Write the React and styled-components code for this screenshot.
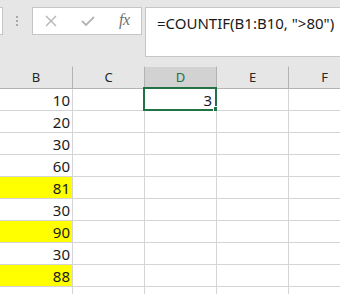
import React from 'react'
import styled, { createGlobalStyle } from 'styled-components'

const GlobalStyle = createGlobalStyle`
  body {
    margin: 0;
    background: #ffffff;
    font-family: 'Noto Sans', 'Open Sans', sans-serif;
    overflow: hidden;
  }
`

const EXCEL_GREEN = '#217346'
const GRID_LINE = '#d4d4d4'
const HEAD_LINE = '#b3b3b3'

const Sheet = styled.div`
  width: 340px;
  height: 294px;
  overflow: hidden;
`

const FormulaBar = styled.div`
  height: 66px;
  background: #e6e6e6;
  display: flex;
  align-items: flex-start;
  padding-top: 7px;
  box-sizing: border-box;
`

const NameBoxStub = styled.div`
  width: 3px;
  height: 28px;
  background: #fff;
  border: 1px solid #c6c6c6;
  border-left: none;
  box-sizing: border-box;
`

const Grip = styled.div`
  width: 2px;
  margin: 9px 14px 0 13px;
  display: flex;
  flex-direction: column;
  gap: 2px;

  span {
    width: 2px;
    height: 2px;
    background: #a8a8a8;
  }
`

const ActionBox = styled.div`
  width: 110px;
  height: 28px;
  background: #fff;
  border: 1px solid #c6c6c6;
  box-sizing: border-box;
  display: flex;
  align-items: center;
  padding-left: 12px;
  gap: 24px;
`

const FxLabel = styled.span`
  font-family: 'Liberation Serif', serif;
  font-style: italic;
  font-size: 16px;
  color: #6f6f6f;
  margin-top: -2px;
  letter-spacing: -0.5px;
`

const FormulaInput = styled.div`
  flex: 1;
  margin-left: 3px;
  height: 50px;
  background: #fff;
  border: 1px solid #c6c6c6;
  border-right: none;
  box-sizing: border-box;
  padding: 5px 0 0 11px;
  font-size: 15px;
  color: #1a1a1a;
  white-space: nowrap;
`

const Grid = styled.div`
  display: grid;
  grid-template-columns: 73px 72px 72px 72px 72px;
`

const HeadCell = styled.div`
  height: 23px;
  box-sizing: border-box;
  background: ${(p) => (p.active ? '#d2d2d2' : '#e6e6e6')};
  color: ${(p) => (p.active ? EXCEL_GREEN : '#262626')};
  border-bottom: 1px solid ${(p) => (p.active ? EXCEL_GREEN : HEAD_LINE)};
  border-right: 1px solid ${HEAD_LINE};
  border-top: 1px solid #e6e6e6;
  font-size: 13px;
  display: flex;
  align-items: center;
  justify-content: center;
  padding-bottom: 1px;
`

const Cell = styled.div`
  position: relative;
  height: 22px;
  box-sizing: border-box;
  border-right: 1px solid ${GRID_LINE};
  border-bottom: 1px solid ${GRID_LINE};
  background: ${(p) => (p.fill ? '#ffff00' : '#ffffff')};
  font-size: 15px;
  color: #1a1a1a;
  text-align: right;
  padding-right: ${(p) => (p.selected ? '4px' : '2px')};
  line-height: 23px;
`

const Selection = styled.div`
  position: absolute;
  left: -2px;
  top: -2px;
  right: -1px;
  bottom: -1px;
  border: 2px solid ${EXCEL_GREEN};
  pointer-events: none;
`

const FillHandle = styled.div`
  position: absolute;
  left: 69px;
  top: 18px;
  width: 5px;
  height: 5px;
  background: ${EXCEL_GREEN};
  box-shadow: 0 0 0 1px #ffffff;
`

function CancelIcon() {
  return (
    <svg width="12" height="12" viewBox="0 0 12 12">
      <path d="M1 1 L11 11 M11 1 L1 11" stroke="#b4b4b4" strokeWidth="1.4" fill="none" />
    </svg>
  )
}

function EnterIcon() {
  return (
    <svg width="14" height="12" viewBox="0 0 14 12">
      <path d="M1 6 L5 10 L13 2" stroke="#b4b4b4" strokeWidth="1.8" fill="none" />
    </svg>
  )
}

const columns = ['B', 'C', 'D', 'E', 'F']
const values = [
  { v: 10 },
  { v: 20 },
  { v: 30 },
  { v: 60 },
  { v: 81, hi: true },
  { v: 30 },
  { v: 90, hi: true },
  { v: 30 },
  { v: 88, hi: true },
  { v: '' },
]

export default function App() {
  return (
    <Sheet>
      <GlobalStyle />
      <FormulaBar>
        <NameBoxStub />
        <Grip>
          <span />
          <span />
          <span />
        </Grip>
        <ActionBox>
          <CancelIcon />
          <EnterIcon />
          <FxLabel>fx</FxLabel>
        </ActionBox>
        <FormulaInput>=COUNTIF(B1:B10, "&gt;80")</FormulaInput>
      </FormulaBar>
      <Grid>
        {columns.map((c) => (
          <HeadCell key={c} active={c === 'D'}>
            {c}
          </HeadCell>
        ))}
        {values.map((row, i) => (
          <React.Fragment key={i}>
            <Cell fill={row.hi}>{row.v}</Cell>
            <Cell />
            <Cell selected={i === 0}>
              {i === 0 && (
                <>
                  3
                  <Selection />
                  <FillHandle />
                </>
              )}
            </Cell>
            <Cell />
            <Cell />
          </React.Fragment>
        ))}
      </Grid>
    </Sheet>
  )
}
